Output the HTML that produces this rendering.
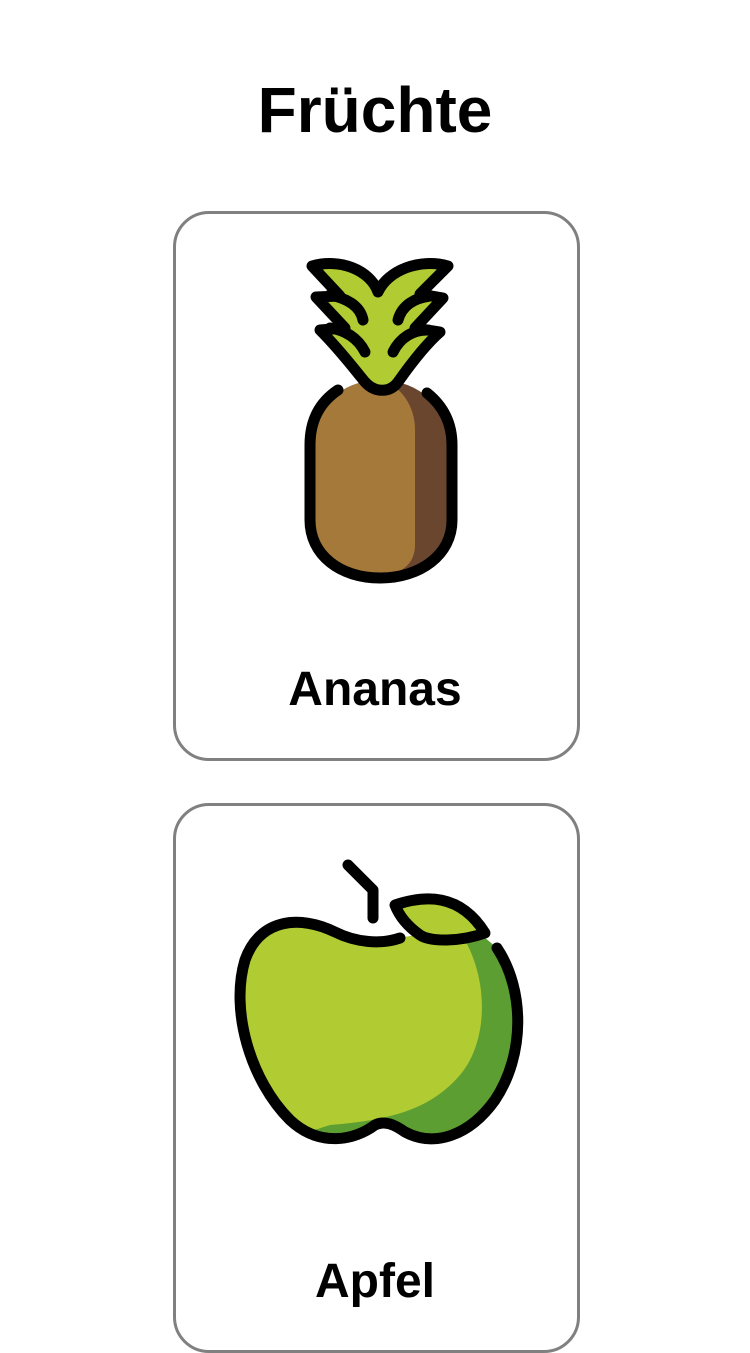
<!DOCTYPE html>
<html><head><meta charset="utf-8"><style>
html,body{margin:0;padding:0;background:#fff;width:750px;height:1334px;overflow:hidden;font-family:"Liberation Sans",sans-serif}
h1{position:absolute;top:72px;left:0;width:750px;text-align:center;margin:0;font-size:64px;font-weight:bold;line-height:76px}
.card{position:absolute;left:173px;width:401px;height:544px;border:3px solid #808080;border-radius:36px;box-sizing:content-box}
.lbl{position:absolute;left:0;width:750px;text-align:center;font-size:48px;font-weight:bold;line-height:54px}
svg{position:absolute;left:0;top:0}
</style></head><body>
<h1>Früchte</h1>
<div class="card" style="top:211px"></div>
<div class="card" style="top:803px"></div>
<div class="lbl" style="top:663px">Ananas</div>
<div class="lbl" style="top:1255px">Apfel</div>
<svg width="750" height="1334" viewBox="0 0 750 1334">
<defs><clipPath id="ac"><path d="M400,938 C380,945 355,942 335,932 C300,915 260,918 245,960 C230,1010 250,1080 290,1120 C320,1148 355,1140 375,1125 C385,1120 395,1125 405,1132 C435,1148 470,1135 495,1100 C525,1055 525,990 497,948 L470,925 Z"/></clipPath></defs>
<path d="M380,380 C420,380 452,410 452,450 L452,520 C452,555 420,578 380,578 C340,578 310,555 310,520 L310,450 C310,410 340,380 380,380 Z" fill="#6A462F"/>
<path d="M380,380 C400,385 415,405 415,430 L415,545 C415,565 400,575 380,575 C340,575 313,555 313,520 L313,450 C313,410 340,380 380,380 Z" fill="#A57939"/>
<path d="M338,390 C320,402 310,420 310,445 L310,520 C310,555 340,578 380,578 C420,578 452,555 452,520 L452,445 C452,422 442,405 427,393" fill="none" stroke="#000" stroke-width="11" stroke-linecap="round" stroke-linejoin="round"/>
<path d="M378,292 C370,270 340,258 312,266 L340,296 L316,297 L345,328 L320,330 C340,350 355,370 365,382 C375,393 390,393 398,382 C410,365 425,345 440,332 L415,328 L443,298 L420,294 L448,266 C420,258 388,270 378,292 Z" fill="#B1CC33" stroke="#000" stroke-width="11" stroke-linejoin="round"/>
<g fill="none" stroke="#000" stroke-width="11" stroke-linecap="round">
<path d="M363,320 C360,305 345,298 330,295"/><path d="M365,352 C358,338 345,330 330,328"/>
<path d="M398,320 C402,305 415,298 430,296"/><path d="M393,352 C400,338 412,330 428,330"/>
</g>
<g clip-path="url(#ac)">
<rect x="220" y="880" width="320" height="280" fill="#5C9E31"/>
<path d="M220,900 L455,925 C490,970 490,1040 460,1075 C430,1110 390,1120 330,1125 L220,1160 Z" fill="#B1CC33"/>
</g>
<path d="M395,905 C425,895 460,893 485,933 C460,942 430,942 420,935 C410,928 400,918 395,905 Z" fill="#B1CC33" stroke="#000" stroke-width="11" stroke-linejoin="round"/>
<g fill="none" stroke="#000" stroke-width="11" stroke-linecap="round" stroke-linejoin="round">
<path d="M400,938 C380,945 355,942 335,932 C300,915 260,918 245,960 C230,1010 250,1080 290,1120 C320,1148 355,1140 375,1125 C385,1120 395,1125 405,1132 C435,1148 470,1135 495,1100 C525,1055 525,990 497,948"/>
<path d="M348,865 L373,890 L373,918"/>
</g>
</svg>
</body></html>
